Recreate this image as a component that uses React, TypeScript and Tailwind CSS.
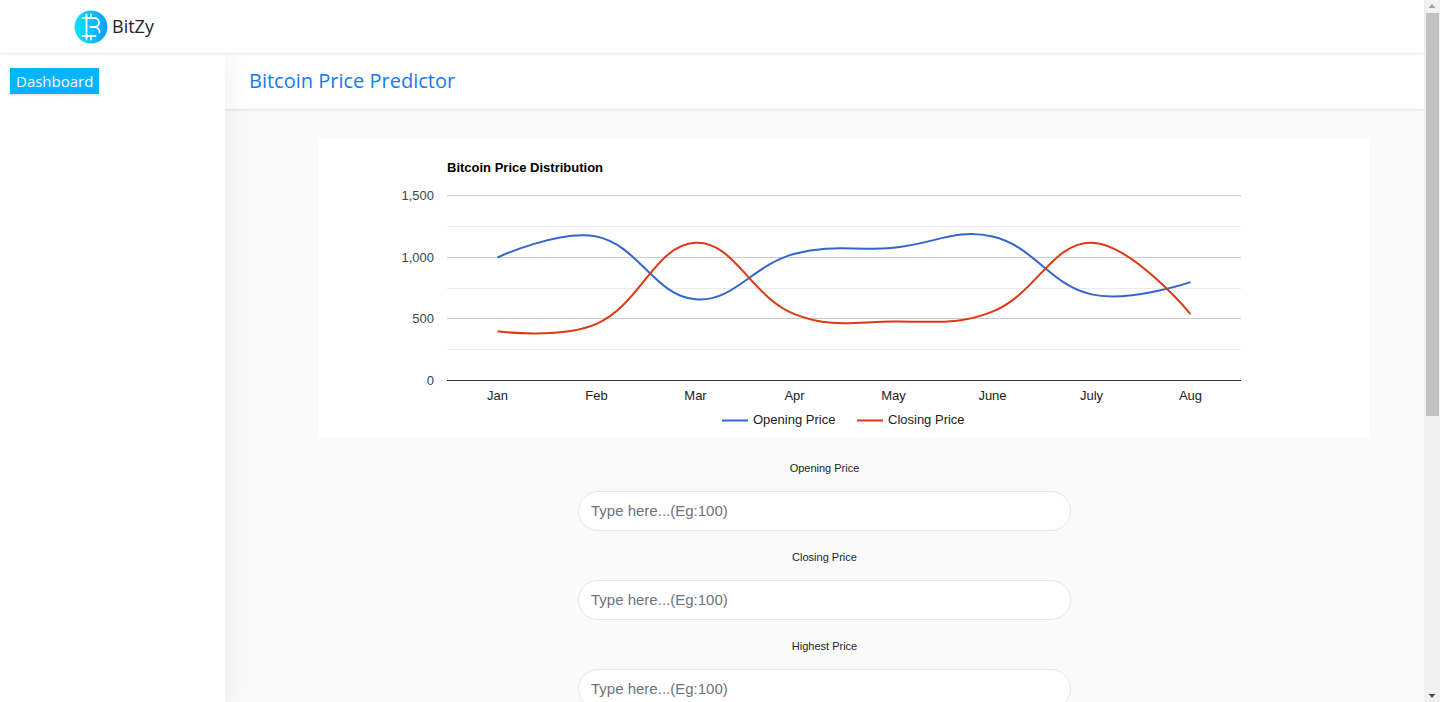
const opening = [1000, 1170, 660, 1030, 1080, 1170, 700, 800];
const closing = [400, 460, 1120, 540, 480, 560, 1120, 540];
const months = ['Jan', 'Feb', 'Mar', 'Apr', 'May', 'June', 'July', 'Aug'];
const gridLines = [1500, 1250, 1000, 750, 500, 250];

const xAt = (i: number) => 178.5 + i * 99;
const yAt = (v: number) => 242.5 - v * 0.123;

// Each control handle follows the chord of its neighbours, scaled by the length of its own side.
function smoothPath(values: number[]) {
  const pts = values.map((v, i) => [xAt(i), yAt(v)]);
  const last = pts.length - 1;
  const dist = (i: number, j: number) => Math.hypot(pts[i][0] - pts[j][0], pts[i][1] - pts[j][1]);
  const handle = (i: number, side: number) => {
    if (i === 0 || i === last) return pts[i];
    const share = (0.4 * dist(i, i + side)) / (dist(i, i - 1) + dist(i, i + 1));
    return [
      pts[i][0] + side * share * (pts[i + 1][0] - pts[i - 1][0]),
      pts[i][1] + side * share * (pts[i + 1][1] - pts[i - 1][1]),
    ];
  };
  let d = `M${pts[0].join()}`;
  for (let i = 0; i < last; i++) {
    d += `C${handle(i, 1).join()},${handle(i + 1, -1).join()},${pts[i + 1].join()}`;
  }
  return d;
}

function Logo() {
  return (
    <svg className="size-[34px]" viewBox="0 0 34 34" fill="none" aria-hidden="true">
      <defs>
        <linearGradient id="logoFill" x1="0" y1="0" x2="1" y2="0">
          <stop offset="0" stopColor="#0ce2fb" />
          <stop offset="1" stopColor="#0c9ffb" />
        </linearGradient>
      </defs>
      <circle cx="17" cy="17" r="16.5" fill="url(#logoFill)" />
      <path
        d="M8.500 8H20.500a4.500 4.500 0 0 1 0 9H16.500M20.500 17a5 5 0 0 1 5 5.500M8.500 26H21.500M12.500 4.500V29.500M17 4.500V8M17 26V29.500"
        stroke="#fff"
        strokeWidth="1.800"
        strokeLinecap="round"
      />
    </svg>
  );
}

function PriceChart() {
  return (
    <svg
      className="block w-full bg-white font-['Liberation_Sans',Arial,sans-serif] text-[13px]"
      viewBox="0 0 1050 300"
      role="img"
      aria-label="Bitcoin Price Distribution"
    >
      <text x="128" y="34" fontWeight="bold" fill="#000">Bitcoin Price Distribution</text>
      {gridLines.map((v) => (
        <line key={v} x1="128" x2="922" y1={Math.ceil(yAt(v)) - 0.5} y2={Math.ceil(yAt(v)) - 0.5} stroke={v % 500 === 0 ? '#ccc' : '#ebebeb'} />
      ))}
      {[1500, 1000, 500, 0].map((v) => (
        <text key={v} x="115" y={Math.round(yAt(v)) + 4} textAnchor="end" fill="#444">{v.toLocaleString('en-US')}</text>
      ))}
      {months.map((m, i) => (
        <text key={m} x={xAt(i)} y="262" textAnchor="middle" fill="#222">{m}</text>
      ))}
      <line x1="128" x2="922" y1="242.5" y2="242.5" stroke="#333" />
      <path d={smoothPath(opening)} fill="none" stroke="#3366cc" strokeWidth="2" />
      <path d={smoothPath(closing)} fill="none" stroke="#dc3912" strokeWidth="2" />
      <line x1="403" x2="429" y1="282.500" y2="282.500" stroke="#3366cc" strokeWidth="2" />
      <text x="434" y="286" fill="#222">Opening Price</text>
      <line x1="538" x2="564" y1="282.500" y2="282.500" stroke="#dc3912" strokeWidth="2" />
      <text x="569" y="286" fill="#222">Closing Price</text>
    </svg>
  );
}

function PriceField({ id, label }: { id: string; label: string }) {
  return (
    <div className="flex flex-col items-center">
      <label htmlFor={id} className="text-[11px] leading-4 text-[#212529]">{label}</label>
      <input
        id={id}
        type="text"
        placeholder="Type here...(Eg:100)"
        className="mt-[15px] h-10 w-full rounded-full border border-[#e6e6e6] bg-white px-3 pb-0.5 text-[15px] text-[#495057] outline-none placeholder:text-[#6c757d]"
      />
    </div>
  );
}

function ScrollRail() {
  return (
    <div className="flex w-4 shrink-0 flex-col items-center bg-[#f1f1f1]" aria-hidden="true">
      <svg className="h-[13px] w-4 shrink-0" viewBox="0 0 16 13"><path d="M4.500 8L8 4L11.500 8Z" fill="#a3a3a3" /></svg>
      <div className="h-[57.4%] w-[13px] bg-[#c1c1c1]" />
      <div className="flex-1" />
      <svg className="h-[13px] w-4 shrink-0" viewBox="0 0 16 13"><path d="M4.500 5L8 9L11.500 5Z" fill="#505050" /></svg>
    </div>
  );
}

export default function App() {
  return (
    <div className="flex h-screen overflow-hidden bg-[#fafafa] font-['Liberation_Sans',Arial,sans-serif]">
      <div className="flex min-w-0 flex-1 flex-col">
        <header className="z-20 flex h-[53px] shrink-0 items-center bg-white pl-[74px] shadow-[0_1px_2px_rgba(0,0,0,0.1)]">
          <a href="#home" className="flex items-center gap-1 font-['Open_Sans','Noto_Sans',sans-serif] text-lg text-[#212529]">
            <Logo />
            <span className="pb-0.5">BitZy</span>
          </a>
        </header>
        <div className="flex min-h-0 flex-1">
          <aside className="z-10 w-[225px] shrink-0 bg-white shadow-[0_0_28px_rgba(0,0,0,0.08)]">
            <nav className="flex pt-[15px] pl-[10px]">
              <a href="#dashboard" className="bg-[#04b4fc] px-1.5 font-['Open_Sans','Noto_Sans',sans-serif] text-[15px] leading-[26px] text-white shadow-[0_1px_2px_rgba(0,0,0,0.15)]">
                Dashboard
              </a>
            </nav>
          </aside>
          <main className="min-w-0 flex-1 overflow-hidden">
            <div className="flex h-[56px] items-center bg-white pl-6 shadow-[0_1px_2px_rgba(0,0,0,0.1)]">
              <h1 className="font-['Open_Sans','Noto_Sans',sans-serif] text-xl text-[#147af3]">Bitcoin Price Predictor</h1>
            </div>
            <section className="mt-[29px] mr-[55px] ml-[94px]">
              <PriceChart />
            </section>
            <form className="mx-auto mt-[22px] flex w-[493px] flex-col gap-[18px]">
              <PriceField id="opening" label="Opening Price" />
              <PriceField id="closing" label="Closing Price" />
              <PriceField id="highest" label="Highest Price" />
            </form>
          </main>
        </div>
      </div>
      <ScrollRail />
    </div>
  );
}
